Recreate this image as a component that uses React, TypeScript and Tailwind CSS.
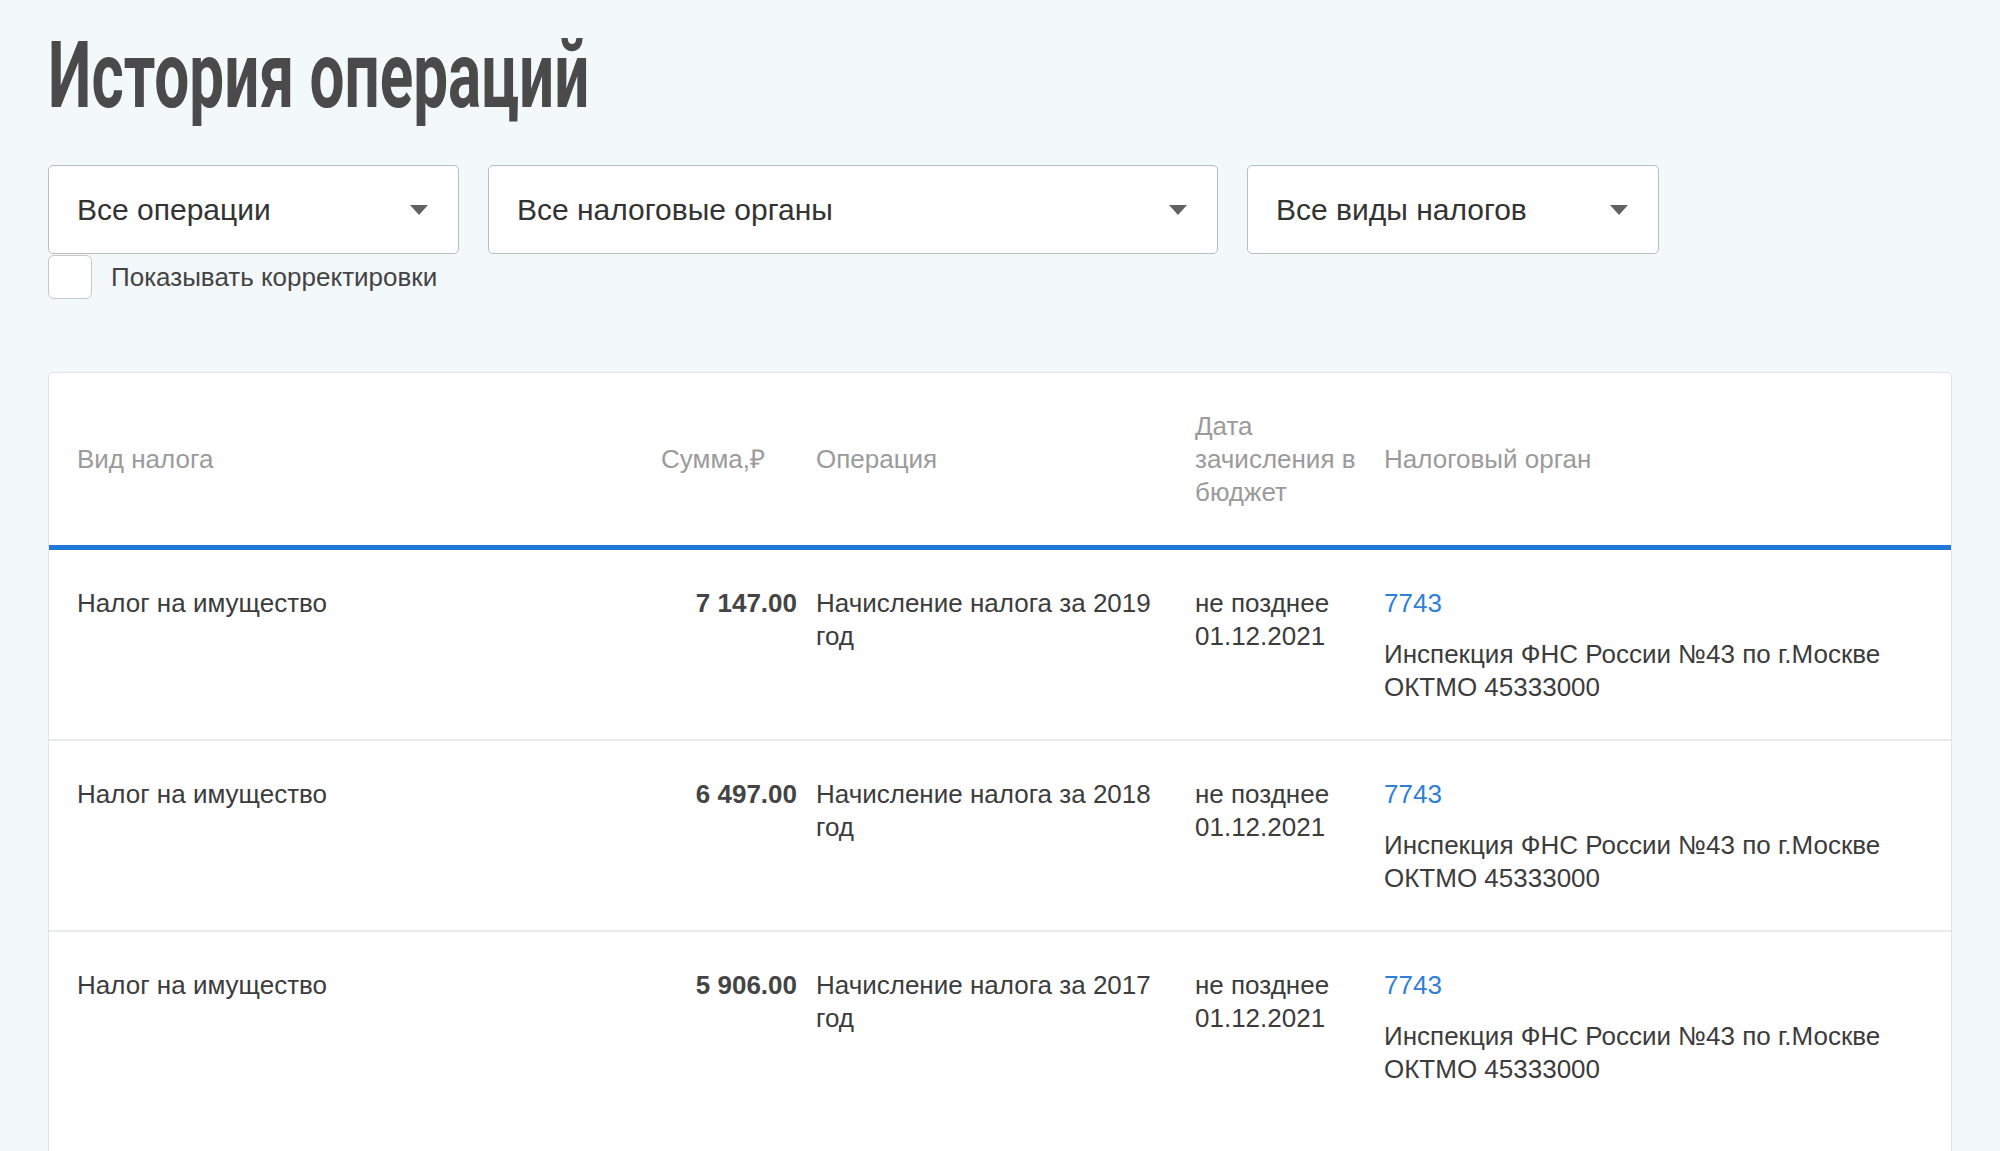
import React from 'react';

const rows = [
  { tax: 'Налог на имущество', sum: '7 147.00', year: '2019' },
  { tax: 'Налог на имущество', sum: '6 497.00', year: '2018' },
  { tax: 'Налог на имущество', sum: '5 906.00', year: '2017' },
];

const Select: React.FC<{ label: string; width: string }> = ({ label, width }) => (
  <div
    className={`${width} h-[89px] flex items-center justify-between bg-white border border-[#b9bdc0] rounded-[5px] pl-[28px] pr-[30px]`}
  >
    <span className="text-[30px] text-[#333333]">{label}</span>
    <svg width="18" height="10" viewBox="0 0 18 10">
      <path d="M0 0h18L9 10z" fill="#5f6366" />
    </svg>
  </div>
);

const App: React.FC = () => {
  return (
    <div className="min-h-screen bg-[#f3f8fb] font-['Liberation_Sans',Arial,sans-serif] text-[#3c3c3c] pl-[48px] pr-[48px] pt-[26px]">
      <h1 className="h-[100px] leading-[100px]">
        <span className="inline-block origin-left scale-x-[0.667] font-['Roboto',sans-serif] font-bold text-[93px] text-[#4a4a4a] whitespace-nowrap">
          История операций
        </span>
      </h1>

      <div className="mt-[39px] flex gap-[29px]">
        <Select label="Все операции" width="w-[411px]" />
        <Select label="Все налоговые органы" width="w-[730px]" />
        <Select label="Все виды налогов" width="w-[412px]" />
      </div>

      <label className="mt-[1px] flex items-center gap-[19px]">
        <span className="w-[44px] h-[44px] bg-white border border-[#c6c9cb] rounded-[6px]" />
        <span className="text-[26px] text-[#444444]">Показывать корректировки</span>
      </label>

      <div className="mt-[73px] bg-white border border-[#e1e4e6] rounded-[5px] w-[1904px] pb-[80px]">
        <div className="grid grid-cols-[551px_150px_360px_170px_1fr] gap-x-[19px] px-[28px] h-[177px] items-center border-b-[5px] border-[#1e78d7] text-[26px] leading-[33px] text-[#9b9b9b]">
          <div>Вид налога</div>
          <div className="text-right pr-[32px]">Сумма,₽</div>
          <div>Операция</div>
          <div>Дата зачисления в бюджет</div>
          <div>Налоговый орган</div>
        </div>

        {rows.map((r, i) => (
          <div
            key={i}
            className={`grid grid-cols-[551px_150px_360px_170px_1fr] gap-x-[19px] px-[28px] pt-[37px] h-[191px] text-[26px] leading-[33px] ${
              i < rows.length - 1 ? 'border-b-2 border-[#e8eaeb]' : ''
            }`}
          >
            <div>{r.tax}</div>
            <div className="text-right font-bold text-[#444444]">{r.sum}</div>
            <div>Начисление налога за {r.year} год</div>
            <div>не позднее 01.12.2021</div>
            <div>
              <div className="text-[#2f7fd8]">7743</div>
              <div className="mt-[18px]">Инспекция ФНС России №43 по г.Москве</div>
              <div>ОКТМО 45333000</div>
            </div>
          </div>
        ))}
      </div>
    </div>
  );
};

export default App;
